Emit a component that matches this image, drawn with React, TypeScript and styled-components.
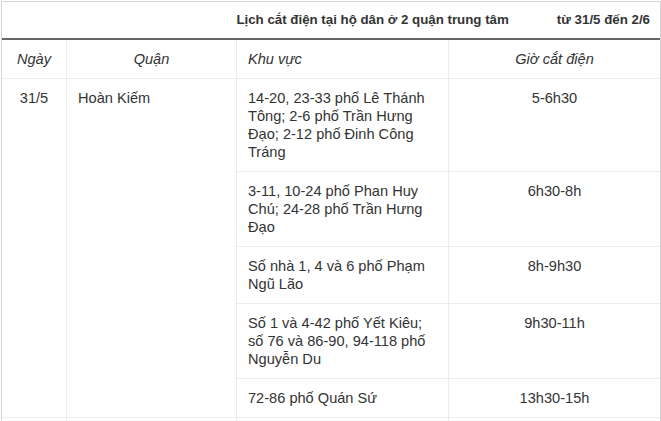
import styled, { createGlobalStyle } from 'styled-components'

const GlobalStyle = createGlobalStyle`
  body {
    margin: 0;
    background: #fff;
    font-family: 'Liberation Sans', Arial, sans-serif;
    color: #333;
  }
`

const Page = styled.div`
  padding: 1px 0 0 1px;
`

const Table = styled.table`
  width: 660px;
  table-layout: fixed;
  border-collapse: separate;
  border-spacing: 0;
  border: 1px solid #d4d4d4;
  font-size: 14.6px;
  line-height: 18px;
`

const TitleCell = styled.th`
  padding: 9px 10px 9px 0;
  border-bottom: 2px solid #666;
  font-size: 13.3px;
  font-weight: bold;
  color: #333;
`

const TitleLine = styled.div`
  display: flex;
  justify-content: flex-end;
  gap: 48px;
`

const HeadCell = styled.th<{ $align?: 'left' | 'center'; $last?: boolean }>`
  padding: 10px 11px;
  font-style: italic;
  font-weight: normal;
  text-align: ${(p) => p.$align ?? 'center'};
  border-bottom: 1px solid #ececec;
  border-right: ${(p) => (p.$last ? 'none' : '1px solid #ececec')};
  color: #333;
`

const Cell = styled.td<{ $align?: 'left' | 'center'; $last?: boolean }>`
  padding: 10px 11px;
  vertical-align: top;
  text-align: ${(p) => p.$align ?? 'left'};
  border-bottom: 1px solid #ececec;
  border-right: ${(p) => (p.$last ? 'none' : '1px solid #ececec')};
`

const slots = [
  { area: '14-20, 23-33 phố Lê Thánh Tông; 2-6 phố Trần Hưng Đạo; 2-12 phố Đinh Công Tráng', time: '5-6h30' },
  { area: '3-11, 10-24 phố Phan Huy Chú; 24-28 phố Trần Hưng Đạo', time: '6h30-8h' },
  { area: 'Số nhà 1, 4 và 6 phố Phạm Ngũ Lão', time: '8h-9h30' },
  { area: 'Số 1 và 4-42 phố Yết Kiêu; số 76 và 86-90, 94-118 phố Nguyễn Du', time: '9h30-11h' },
  { area: '72-86 phố Quán Sứ', time: '13h30-15h' },
]

export default function App() {
  return (
    <>
      <GlobalStyle />
      <Page>
        <Table>
          <colgroup>
            <col style={{ width: 65 }} />
            <col style={{ width: 170 }} />
            <col style={{ width: 212 }} />
            <col style={{ width: 211 }} />
          </colgroup>
          <thead>
            <tr>
              <TitleCell colSpan={4}>
                <TitleLine>
                  <span>Lịch cắt điện tại hộ dân ở 2 quận trung tâm</span>
                  <span>từ 31/5 đến 2/6</span>
                </TitleLine>
              </TitleCell>
            </tr>
            <tr>
              <HeadCell>Ngày</HeadCell>
              <HeadCell>Quận</HeadCell>
              <HeadCell $align="left">Khu vực</HeadCell>
              <HeadCell $last>Giờ cắt điện</HeadCell>
            </tr>
          </thead>
          <tbody>
            {slots.map((s, i) => (
              <tr key={s.time}>
                {i === 0 && (
                  <>
                    <Cell rowSpan={slots.length} $align="center">31/5</Cell>
                    <Cell rowSpan={slots.length}>Hoàn Kiếm</Cell>
                  </>
                )}
                <Cell>{s.area}</Cell>
                <Cell $align="center" $last>{s.time}</Cell>
              </tr>
            ))}
            <tr>
              <Cell>&nbsp;</Cell>
              <Cell>&nbsp;</Cell>
              <Cell>&nbsp;</Cell>
              <Cell $last>&nbsp;</Cell>
            </tr>
          </tbody>
        </Table>
      </Page>
    </>
  )
}
